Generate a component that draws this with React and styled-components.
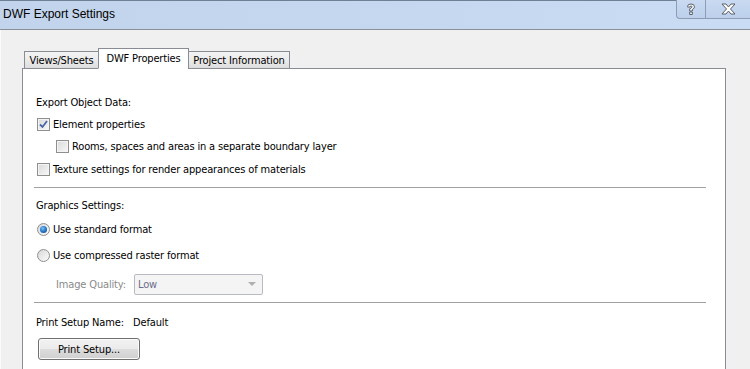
import React from 'react'
import styled, { createGlobalStyle } from 'styled-components'

const Global = createGlobalStyle`
  html, body { margin: 0; padding: 0; background: #f0f0f0; }
  body { font-family: Tahoma, "DejaVu Sans Condensed", "Liberation Sans", sans-serif; font-size: 11px; letter-spacing: -0.15px; color: #000; }
  * { box-sizing: border-box; }
`

const Window = styled.div`
  width: 750px;
  height: 369px;
  overflow: hidden;
  display: flex;
  flex-direction: column;
  background: #f0f0f0;
`

const TitleBar = styled.div`
  height: 30px;
  flex: none;
  display: flex;
  align-items: flex-start;
  justify-content: space-between;
  background: linear-gradient(90deg, #c2d4ec 0%, #c6d8f0 60%, #cadcf3 100%);
  border-top: 1px solid #6f7f94;
  border-bottom: 1px solid #8a8f98;
`

const Title = styled.div`
  font-family: "Segoe UI", "Liberation Sans", sans-serif;
  font-size: 12px;
  letter-spacing: 0;
  padding: 6px 0 0 3px;
  color: #000;
`

const Caption = styled.div`
  display: flex;
  height: 19px;
  margin-top: -1px;
  border: 1px solid #8d9db3;
  border-top: none;
  border-right: none;
  border-bottom-left-radius: 4px;
  background: linear-gradient(180deg, #c9daf1, #bcd0ec);
`

const CaptionBtn = styled.div`
  width: ${p => p.w}px;
  display: flex;
  align-items: center;
  justify-content: center;
  & + & { border-left: 1px solid #8d9db3; }
`

const Body = styled.div`
  flex: 1;
  padding: 18px 24px 0 21px;
  display: flex;
  flex-direction: column;
  border-left: 1px solid #fafafa;
`

const TabStrip = styled.div`
  display: flex;
  align-items: flex-end;
  height: 21px;
  padding-left: 2px;
  position: relative;
  z-index: 1;
  margin-bottom: -1px;
`

const Tab = styled.div`
  height: ${p => (p.active ? 21 : 18)}px;
  padding: ${p => (p.active ? '3px 0 0' : '2px 0 0')};
  width: ${p => p.w}px;
  text-align: center;
  border: 1px solid #898c95;
  border-bottom: ${p => (p.active ? '1px solid #fff' : '1px solid #898c95')};
  margin-left: ${p => (p.first ? 0 : -1)}px;
  background: ${p => (p.active ? '#fff' : 'linear-gradient(180deg, #f3f3f3 0%, #ebebeb 50%, #dddddd 100%)')};
  white-space: nowrap;
`

const Panel = styled.div`
  flex: 1;
  background: #fff;
  border: 1px solid #898c95;
  border-bottom: none;
  padding: 22px 19px 0 11px;
  display: flex;
  flex-direction: column;
`

const Row = styled.div`
  height: ${p => p.h}px;
  display: flex;
  align-items: center;
  padding-left: ${p => p.indent || 2}px;
  color: ${p => (p.disabled ? '#8a8a8a' : '#000')};
  white-space: nowrap;
`

const Separator = styled.div`
  height: 1px;
  background: #a0a0a0;
  margin: ${p => p.m};
`

const Box = styled.span`
  width: 13px;
  height: 13px;
  flex: none;
  margin-right: 3px;
  border: 1px solid #8f8f8f;
  background: linear-gradient(135deg, #d9d9d9 0%, #ececec 60%, #f9f9f9 100%);
  box-shadow: inset 0 0 0 1px #f4f4f4;
  display: flex;
  align-items: center;
  justify-content: center;
`

const Radio = styled.span`
  width: 13px;
  height: 13px;
  flex: none;
  margin-right: 3px;
  border-radius: 50%;
  border: 1px solid #8f8f8f;
  background: linear-gradient(135deg, #d6d6d6 0%, #eeeeee 60%, #fafafa 100%);
  display: flex;
  align-items: center;
  justify-content: center;
`

const Dot = styled.span`
  width: 7px;
  height: 7px;
  border-radius: 50%;
  background: radial-gradient(circle at 40% 35%, #7ec2f2 0%, #2a7ed0 45%, #0f3f7a 100%);
`

const Label = styled.span`
  width: ${p => p.w}px;
  flex: none;
`

const Select = styled.div`
  width: 129px;
  height: 21px;
  margin-left: 6px;
  border: 1px solid #b8bcc2;
  border-radius: 2px;
  background: #f4f4f4;
  color: #6d6d8a;
  display: flex;
  align-items: center;
  justify-content: space-between;
  padding: 0 6px 0 3px;
`

const Arrow = styled.span`
  width: 0;
  height: 0;
  border-left: 4px solid transparent;
  border-right: 4px solid transparent;
  border-top: 4px solid #b0b0b0;
`

const Button = styled.div`
  width: 102px;
  height: 22px;
  margin: 4px 0 0 4px;
  border: 1px solid #707070;
  border-radius: 3px;
  background: linear-gradient(180deg, #f2f2f2 0%, #ebebeb 50%, #dddddd 51%, #cfcfcf 100%);
  box-shadow: inset 0 0 0 1px #fbfbfb;
  display: flex;
  align-items: center;
  justify-content: center;
`

const Check = () => (
  <svg width="9" height="9" viewBox="0 0 9 9">
    <path d="M1 4.5 L3.5 7 L8 1" fill="none" stroke="#4a64a8" strokeWidth="1.8" />
  </svg>
)

const CheckBox = ({ checked }) => <Box>{checked && <Check />}</Box>

const HelpIcon = () => (
  <svg width="10" height="13" viewBox="0 0 10 13">
    <path d="M1.5 3.5 Q1.5 1 5 1 Q8.5 1 8.5 3.8 Q8.5 5.5 6.3 6.5 L6.3 8 L3.7 8 L3.7 5.8 Q6 5 6 3.8 Q6 3 5 3 Q4 3 4 4 L1.5 4 Z M3.7 9 L6.3 9 L6.3 11.5 L3.7 11.5 Z" fill="#fff" stroke="#5a5f68" strokeWidth="1" />
  </svg>
)

const CloseIcon = () => (
  <svg width="15" height="12" viewBox="0 0 15 12">
    <path d="M1 1 L5 1 L7.5 4 L10 1 L14 1 L9.5 6 L14 11 L10 11 L7.5 8 L5 11 L1 11 L5.5 6 Z" fill="#fff" stroke="#5a5f68" strokeWidth="1" />
  </svg>
)

export default function App() {
  return (
    <>
      <Global />
      <Window>
        <TitleBar>
          <Title>DWF Export Settings</Title>
          <Caption>
            <CaptionBtn w={28}><HelpIcon /></CaptionBtn>
            <CaptionBtn w={45}><CloseIcon /></CaptionBtn>
          </Caption>
        </TitleBar>
        <Body>
          <TabStrip>
            <Tab first w={75}>Views/Sheets</Tab>
            <Tab active w={91}>DWF Properties</Tab>
            <Tab w={102}>Project Information</Tab>
          </TabStrip>
          <Panel>
            <Row h={22}>Export Object Data:</Row>
            <Row h={22} indent={3}><CheckBox checked />Element properties</Row>
            <Row h={23} indent={22}><CheckBox />Rooms, spaces and areas in a separate boundary layer</Row>
            <Row h={22} indent={3}><CheckBox />Texture settings for render appearances of materials</Row>
            <Separator m="7px 0 6px" />
            <Row h={22}>Graphics Settings:</Row>
            <Row h={26} indent={3}><Radio><Dot /></Radio>Use standard format</Row>
            <Row h={26} indent={3}><Radio />Use compressed raster format</Row>
            <Row h={32} indent={22} disabled>
              <Label w={72}>Image Quality:</Label>
              <Select>Low<Arrow /></Select>
            </Row>
            <Separator m="2px 0 7px" />
            <Row h={24}>
              <Label w={97}>Print Setup Name:</Label>Default
            </Row>
            <Button>Print Setup...</Button>
          </Panel>
        </Body>
      </Window>
    </>
  )
}
